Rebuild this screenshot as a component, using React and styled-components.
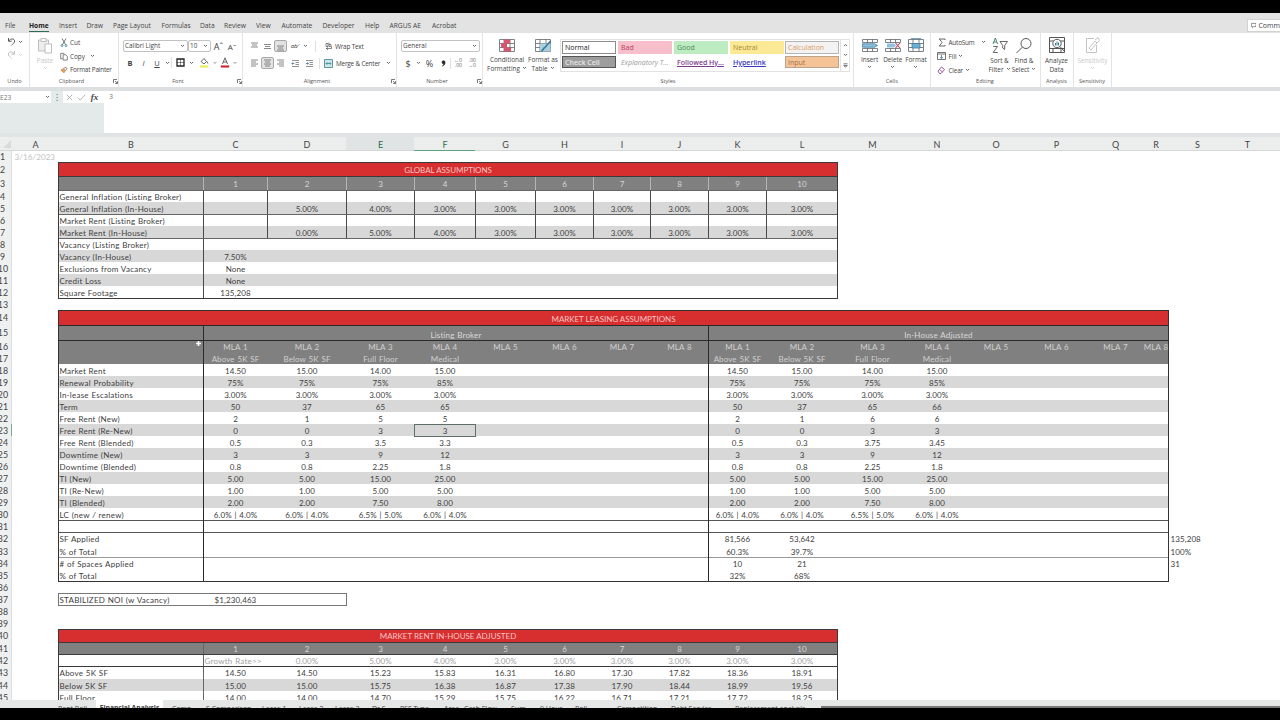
import React from "react";
import styled, { createGlobalStyle } from "styled-components";

const GlobalStyle = createGlobalStyle`
  * {
    box-sizing: border-box;
  }
  body {
    margin: 0;
    background: #000;
    overflow: hidden;
  }
`;

const Window = styled.div`
  width: 1280px;
  height: 720px;
  padding: 13px 0 12px;
  display: flex;
  flex-direction: column;
  overflow: hidden;
  background: #000;
  font-family: "Open Sans", "Noto Sans", sans-serif;
  font-size: 6.4px;
  color: #444;
`;

/* ---------- menu ---------- */

const MenuBar = styled.div`
  flex: none;
  height: 20px;
  padding: 6px 0 0 5px;
  display: flex;
  align-items: flex-start;
  background: #e3e3e3;
`;

const MenuItem = styled.div`
  width: ${(p) => p.$w}px;
  padding-top: 2px;
  font-size: 6.7px;
  line-height: 10px;
  white-space: nowrap;
  font-weight: ${(p) => (p.$active ? 700 : 400)};
  color: ${(p) => (p.$active ? "#222" : "#444")};

  span {
    display: inline-block;
    height: 11px;
    border-bottom: 1px solid ${(p) => (p.$active ? "#2f6b55" : "transparent")};
  }
`;

const Comments = styled.div`
  margin-left: auto;
  width: 33px;
  height: 13px;
  padding-left: 3px;
  display: flex;
  align-items: center;
  gap: 2px;
  background: #fff;
  border: 1px solid #d2d2d2;
  border-right: 0;
  font-size: 7px;
  white-space: nowrap;
  overflow: hidden;
`;

/* ---------- ribbon ---------- */

const Ribbon = styled.div`
  flex: none;
  height: 58px;
  display: flex;
  background: #fff;
  border-bottom: 4px solid #dde0e0;
`;

const Group = styled.div`
  width: ${(p) => p.$w}px;
  height: 54px;
  display: flex;
  flex-direction: column;
  border-right: 1px solid #e4e4e4;
`;

const GroupBody = styled.div`
  height: 43px;
  padding: ${(p) => p.$pad || "0"};
  display: flex;
  flex-direction: ${(p) => (p.$row ? "row" : "column")};
`;

const GroupLabel = styled.div`
  height: 10px;
  display: flex;
  align-items: center;
  font-size: 5.6px;
  color: #555;

  span {
    flex: 1;
    text-align: center;
  }
`;

const Line = styled.div`
  height: ${(p) => p.$h || 14}px;
  margin-top: ${(p) => p.$mt || 0}px;
  padding-left: ${(p) => p.$pl || 0}px;
  display: flex;
  align-items: center;
  white-space: nowrap;
`;

const Commands = styled.div`
  width: ${(p) => (p.$w ? p.$w + "px" : "auto")};
`;

const Slot = styled.div`
  flex: none;
  width: ${(p) => p.$w}px;
  height: ${(p) => p.$h || 12}px;
  padding-bottom: ${(p) => p.$lift || 0}px;
  display: flex;
  align-items: center;
  justify-content: center;
  font-size: ${(p) => p.$size || 8}px;
  font-weight: ${(p) => (p.$bold ? 700 : 400)};
  font-style: ${(p) => (p.$italic ? "italic" : "normal")};
  text-decoration: ${(p) => (p.$under ? "underline" : "none")};
  background: ${(p) => (p.$on ? "#e2e2e2" : "transparent")};
  border: ${(p) => (p.$on ? "1px solid #a9a9a9" : "0")};
  border-radius: 2px;
`;

const Text = styled.div`
  width: ${(p) => (p.$w ? p.$w + "px" : "auto")};
  padding-left: ${(p) => p.$pl || 0}px;
  letter-spacing: ${(p) => (p.$tight ? "-0.2px" : "normal")};
`;

const Decimals = styled.div`
  display: flex;
  flex-direction: column;
  align-items: flex-end;
  font-size: 5.2px;
  line-height: 4.8px;
  color: #666;

  b {
    font-weight: 400;
    color: #397b99;
  }
`;

const Select = styled.div`
  width: ${(p) => p.$w}px;
  height: 12px;
  padding: 0 2px 0 1px;
  display: flex;
  align-items: center;
  justify-content: space-between;
  border: 1px solid #c3c3c3;
  border-radius: 2px;
  font-size: 6.4px;
  line-height: 8px;
`;

const BigButton = styled.div`
  width: ${(p) => p.$w}px;
  padding-top: ${(p) => p.$pt || 0}px;
  display: flex;
  flex-direction: column;
  align-items: center;
  white-space: nowrap;
  line-height: 8.5px;
  color: ${(p) => (p.$off ? "#c8c8c8" : "#444")};

  > svg:first-child {
    margin-bottom: 3px;
  }
  span svg {
    margin: 0 0 1px 2px;
  }
`;

const Divider = styled.div`
  width: 1px;
  height: 11px;
  background: #e0e0e0;
`;

const Gallery = styled.div`
  width: 290px;
  height: 33px;
  margin-top: 6px;
  padding-left: 1px;
  display: flex;
  border: 1px solid #e2e2e2;
`;

const Styles = styled.div`
  display: grid;
  grid-template-columns: repeat(${(p) => p.$cols}, 54px);
  grid-template-rows: 13px 12px;
  column-gap: 2px;
  row-gap: 2px;
  padding: 1px 0 0 ${(p) => (p.$cols === 1 ? 1 : 0)}px;
`;

const StyleChip = styled.div`
  padding-left: 2px;
  display: flex;
  align-items: center;
  background: ${(p) => p.$bg || "#fff"};
  color: ${(p) => p.$fg || "#222"};
  border: 1px solid ${(p) => p.$line || "transparent"};
  font-size: 7px;
  font-weight: ${(p) => (p.$bold ? 600 : 400)};
  font-style: ${(p) => (p.$italic ? "italic" : "normal")};
  text-decoration: ${(p) => (p.$under ? "underline" : "none")};
  white-space: nowrap;
  overflow: hidden;
`;

const Scroller = styled.div`
  width: 9px;
  margin-left: auto;
  display: grid;
  grid-template-rows: repeat(3, 1fr);
  place-items: center;
  border-left: 1px solid #e2e2e2;
`;

/* ---------- formula bar ---------- */

const FormulaBar = styled.div`
  flex: none;
  height: 42px;
  display: flex;
  background: #e4eae9;
`;

const NameBox = styled.div`
  width: 51px;
  height: 12px;
  padding-right: 1px;
  display: flex;
  align-items: center;
  justify-content: space-between;
  background: #fff;
  color: #777;
  font-size: 6.6px;
`;

const FxBox = styled.div`
  width: 41px;
  height: 12px;
  display: flex;
  align-items: center;
  background: #fff;
`;

const Formula = styled.div`
  flex: 1;
  padding: 1px 0 0 5px;
  background: #fff;
  font-size: 7px;
  line-height: 10px;
  color: #777;
`;

const Fx = styled.span`
  font-family: "Liberation Serif", serif;
  font-style: italic;
  font-weight: 700;
  font-size: 9px;
  color: #444;
`;

/* ---------- sheet ---------- */

const LETTERS = "ABCDEFGHIJKLMNOPQRST".split("");
const X = [0, 12, 58, 203, 267, 346, 414, 475, 535, 593, 650, 708, 766, 837, 907, 966, 1025, 1087, 1143, 1168, 1226, 1268];
const Y = [151, 162, 176, 190, 202, 214, 226, 238, 250, 262, 274, 286, 298, 310, 325, 340, 352, 364, 376, 388, 400, 412, 424, 436, 448, 460, 472, 484, 496, 508, 520, 532, 545, 557, 569, 581, 593, 605, 617, 629, 642, 654, 666, 679, 691, 703];
const tracks = (list) => list.slice(1).map((v, i) => v - list[i] + "px").join(" ");

const Letters = styled.div`
  flex: none;
  height: 18px;
  display: grid;
  grid-template-columns: ${tracks(X)};
  background: #eceeee;
  border-top: 4px solid #e0e4e4;
  border-bottom: 1px solid #d5d8d7;
`;

const Letter = styled.div`
  display: flex;
  align-items: center;
  justify-content: center;
  padding: 1px 0 0 1px;
  font-family: Lato, sans-serif;
  font-size: 9px;
  color: ${(p) => (p.$active ? "#1f7148" : "#444")};
  background: ${(p) => (p.$shade ? "#e1e4e4" : "transparent")};
  box-shadow: ${(p) => (p.$mark ? "0 1px 0 #5fa37f" : "none")};
`;

const Corner = styled.div`
  display: flex;
  align-items: center;
  justify-content: flex-end;
  padding-right: 1px;
`;

const Sheet = styled.div`
  flex: none;
  height: 549px;
  display: grid;
  grid-template-columns: ${tracks(X)};
  grid-template-rows: ${tracks(Y)};
  overflow: hidden;
  background: #fff;
  font-family: Lato, "Open Sans", sans-serif;
  font-size: 8px;
  letter-spacing: 0.1px;
  word-spacing: 0.6px;
  color: #404040;
`;

const area = (p) => `
  grid-column: ${p.$c + 1} / ${(p.$c2 || p.$c) + 2};
  grid-row: ${p.$r} / ${(p.$r2 || p.$r) + 1};
`;

const Fill = styled.div`
  ${area}
  background: ${(p) => p.$bg};
`;

const Frame = styled.div`
  ${area}
  margin: 0 -1px -1px 0;
  border: 0 solid ${(p) => p.$line || "#3a3a3a"};
  border-width: ${(p) => p.$sides || "1px"};
`;

const Cell = styled.div`
  ${area}
  display: flex;
  align-items: center;
  justify-content: center;
  padding: 1px 0 0 1px;
  line-height: 10px;
  white-space: nowrap;
  color: ${(p) => p.$fg || "inherit"};
`;

const Label = styled(Cell)`
  justify-content: flex-start;
  padding-left: 1.5px;
  letter-spacing: 0.24px;
  word-spacing: 0.3px;
`;

const Aside = styled(Cell)`
  justify-content: flex-start;
  padding-left: 2.5px;
`;

const Title = styled(Cell)`
  padding-top: ${(p) => (p.$low ? 3 : 1)}px;
  letter-spacing: -0.03px;
  word-spacing: 0;
  color: #f6c4c2;
`;

const Subtitle = styled(Cell)`
  padding-top: 4px;
  letter-spacing: 0.15px;
  color: #d8d8d8;
`;

const RowNumber = styled(Cell)`
  justify-content: flex-end;
  padding-right: ${(p) => (p.$r > 9 ? 3 : 6)}px;
  font-size: 8.8px;
  letter-spacing: 0;
  background: #eff1f1;
  border-right: 1px solid ${(p) => (p.$current ? "#7fa892" : "#dcdfdf")};
  color: #444;
`;

const Selection = styled.div`
  ${area}
  margin: 0 -1px -1px 0;
  border: 1px solid #5f7068;
`;

const Pointer = styled.div`
  position: absolute;
  left: 196px;
  top: 341px;
  width: 5px;
  height: 5px;
  line-height: 0;
`;

const SheetTabs = styled.div`
  flex: none;
  height: 8px;
  padding-left: 58px;
  display: flex;
  overflow: hidden;
  background: #e5e6e6;
  font-size: 7px;
  line-height: 10px;
  color: #444;
`;

const SheetTab = styled.div`
  flex: none;
  width: ${(p) => p.$w}px;
  height: 15px;
  padding-top: ${(p) => (p.$active ? 3 : 4)}px;
  white-space: nowrap;
  text-align: ${(p) => (p.$active ? "center" : "left")};
  font-size: ${(p) => (p.$active ? 6.7 : 7)}px;
  font-weight: ${(p) => (p.$active ? 700 : 400)};
  background: ${(p) => (p.$active ? "#fff" : "transparent")};
`;

const ScrollTrack = styled.div`
  flex: 1;
  align-self: flex-end;
  height: 2px;
  background: #777;
`;

/* ---------- icons ---------- */

const Icon = ({ w = 10, h = w, vb, color = "#555", sw = 1, children }) => (
  <svg width={w} height={h} viewBox={vb || `0 0 ${w} ${h}`} fill="none" stroke={color} strokeWidth={sw}>
    {children}
  </svg>
);

const Caret = ({ color = "#555" }) => (
  <Icon w={5} h={4} color={color} sw={0.9}>
    <path d="M1 1l1.5 1.5L4 1" />
  </Icon>
);

const Launcher = () => (
  <Icon w={5} h={5} sw={0.8}>
    <path d="M.5 4V.5H4M2 2l2.4 2.4M4.5 2.2v2.3H2.2" />
  </Icon>
);

const Lines = ({ rows }) => (
  <Icon w={9} h={9} color="#6a6a6a" sw={0.8}>
    {rows.map(([y, a, b]) => (
      <path key={y} d={`M${a} ${y}H${b}`} />
    ))}
  </Icon>
);

const TableIcon = ({ kind }) => (
  <Icon w={18} h={15} color="#5d6468" sw={0.8}>
    {kind === "insert" || kind === "delete" ? (
      <path d="M1.5 1.5h15v3h-15zM6.500 1.500v3M11.500 1.500v3M1.500 10.500h15v3h-15zM6.500 10.500v3M11.500 10.500v3" />
    ) : (
      <path d="M1.5 1.5h15v12h-15zM1.5 5.5h15M1.5 9.5h15M6 1.5v12M12 1.5v12" />
    )}
    {kind === "cond" && (
      <g stroke="none" fill="#d9536f">
        <path d="M6 1.5h6v4H6zM3 5.5h6v4H3zM6 9.5h7v4H6z" />
      </g>
    )}
    {kind === "table" && (
      <>
        <path stroke="none" fill="#a9cfe0" d="M6 5.5h10.500v8H6z" />
        <path stroke="#397b99" strokeWidth="1.6" d="M16.500 3l-6 7M10.500 9.500l-3 4" />
      </>
    )}
    {kind === "insert" && <path stroke="#3c7fa6" fill="#8fc1dd" d="M1.500 5.800h12l3 1.700-3 1.700h-12z" />}
    {kind === "delete" && (
      <>
        <path stroke="none" fill="#8fc1dd" d="M3 5.500h7l2 2-2 2H3z" />
        <path stroke="#c33f5c" strokeWidth="1.1" d="M11.500 5l4.500 5M16 5l-4.500 5" />
      </>
    )}
    {kind === "format" && (
      <>
        <path stroke="#3c7fa6" fill="#6daed3" d="M5 5.500h8v4.500H5z" />
        <path stroke="#3c7fa6" d="M4 .4h10" />
      </>
    )}
  </Icon>
);

const Undo = ({ color, flip }) => (
  <Icon w={9} h={9} color={color} sw={1}>
    <path transform={flip ? "translate(9 0) scale(-1 1)" : undefined} d="M1.5 1v3.2h3.2M1.7 4C3.5 1.2 7.5 1.3 7.6 4.1 7.7 5.8 5.800 7 4.500 8.300" />
  </Icon>
);

const Paste = () => (
  <Icon w={16} h={17} color="#bdbdbd" sw={1}>
    <path fill="#ededed" d="M1.500 3h10v11h-10z" />
    <path fill="#fff" d="M4 1.500h5v3H4z" />
    <path fill="#fff" d="M8 7h6.500v9H8z" />
  </Icon>
);

const Scissors = () => (
  <Icon w={8} h={9} sw={0.8}>
    <path d="M2 .5l3.500 6M6 .5L2.500 6.500" />
    <circle cx="2" cy="7.500" r="1" stroke="#397b99" />
    <circle cx="6" cy="7.500" r="1" stroke="#397b99" />
  </Icon>
);

const Copy = () => (
  <Icon w={9} h={9} sw={0.8}>
    <path d="M3 7H.8V1h3.500L5 2M3.500 2.500h3l1.700 1.700V8.500H3.500z" />
  </Icon>
);

const Painter = () => (
  <Icon w={9} h={8} sw={0.8}>
    <path fill="#e9a15b" stroke="#c98342" d="M1 4l3-1.500 2 2L4.500 7.200z" />
    <path d="M4 2.500L6.500.8l1.500 2L6 4.500" />
  </Icon>
);

const Swatch = ({ letter, color }) => (
  <Icon w={10} h={11} sw={0.9}>
    {letter ? <path d="M2.500 7L5 .8 7.500 7M3.300 5h3.400" /> : <path d="M2 4.500L5 1.500l2.500 3L5 7zM8 4.500l.8 2" />}
    <path stroke={color} strokeWidth="2.2" d="M.8 9.500h8.400" />
  </Icon>
);

const Indent = ({ out }) => (
  <Icon w={9} h={9} color="#777" sw={0.8}>
    <path d="M1 1.500h7M4.500 3.500H8M4.500 5.500H8M1 7.500h7" />
    <path stroke="#397b99" d={out ? "M3.500 4.500H.8M2 3.300L.8 4.500 2 5.700" : "M.8 4.500h2.700M2.300 3.300l1.200 1.200-1.200 1.200"} />
  </Icon>
);

const Find = () => (
  <Icon w={18} h={17} sw={1}>
    <circle cx="11" cy="6.500" r="5" />
    <path d="M7.300 10.200L1.500 16" />
  </Icon>
);

const Analyze = () => (
  <Icon w={18} h={18} color="#555" sw={1}>
    <path d="M1.500 1.500h15v15h-15zM1.500 5h15M1.500 12.500h15M5 12.500v4M13 12.500v4" />
    <circle cx="9" cy="7.500" r="4.200" fill="#fff" />
    <path d="M12 10.500l4 4.500" />
    <path stroke="#397b99" d="M7.500 9.500V7M9 9.500v-4M10.500 9.500v-3" />
  </Icon>
);

const Sensitivity = () => (
  <Icon w={15} h={18} color="#c4c4c4" sw={1}>
    <path d="M9 2.500H1.500v14h10V9" />
    <path d="M4 12l6-7 2 2-6 7zM10 4l3-2.500 1.500 3L12 7" />
  </Icon>
);

/* ---------- data ---------- */

const MENU = [
  ["File", 24], ["Home", 30], ["Insert", 27.5], ["Draw", 26.5], ["Page Layout", 48.5], ["Formulas", 38.5],
  ["Data", 24], ["Review", 32], ["View", 25.5], ["Automate", 41], ["Developer", 42.5], ["Help", 24.5],
  ["ARGUS AE", 42.5], ["Acrobat", 40],
];

const years = ["1", "2", "3", "4", "5", "6", "7", "8", "9", "10"];
const three = "3.00%";

// [row, first column, values, color]
const VALUES = [
  [3, 3, years, "#d6d6d6"],
  [5, 4, ["5.00%", "4.00%", three, three, three, three, three, three, three]],
  [7, 4, ["0.00%", "5.00%", "4.00%", three, three, three, three, three, three]],
  [9, 3, ["7.50%"]],
  [10, 3, ["None"]],
  [11, 3, ["None"]],
  [12, 3, ["135,208"]],
  [16, 3, ["MLA 1", "MLA 2", "MLA 3", "MLA 4", "MLA 5", "MLA 6", "MLA 7", "MLA 8", "MLA 1", "MLA 2", "MLA 3", "MLA 4", "MLA 5", "MLA 6", "MLA 7", "MLA 8"], "#d0d0d0"],
  [32, 11, ["81,566", "53,642"]],
  [33, 11, ["60.3%", "39.7%"]],
  [34, 11, ["10", "21"]],
  [35, 11, ["32%", "68%"]],
  [37, 3, ["$1,230,463"]],
  [41, 3, years, "#d6d6d6"],
  [42, 4, ["0.00%", "5.00%", "4.00%", three, three, three, three, three, three], "#a2a2a2"],
  [43, 3, ["14.50", "14.50", "15.23", "15.83", "16.31", "16.80", "17.30", "17.82", "18.36", "18.91"]],
  [44, 3, ["15.00", "15.00", "15.75", "16.38", "16.87", "17.38", "17.90", "18.44", "18.99", "19.56"]],
  [45, 3, ["14.00", "14.00", "14.70", "15.29", "15.75", "16.22", "16.71", "17.21", "17.72", "18.25"]],
];

// four listing broker values, then the in-house ones where they differ
const MLA = [
  [17, ["Above 5K SF", "Below 5K SF", "Full Floor", "Medical"]],
  [18, ["14.50", "15.00", "14.00", "15.00"]],
  [19, ["75%", "75%", "75%", "85%"]],
  [20, [three, three, three, three]],
  [21, ["50", "37", "65", "65"], ["50", "37", "65", "66"]],
  [22, ["2", "1", "5", "5"], ["2", "1", "6", "6"]],
  [23, ["0", "0", "3", "3"]],
  [24, ["0.5", "0.3", "3.5", "3.3"], ["0.5", "0.3", "3.75", "3.45"]],
  [25, ["3", "3", "9", "12"]],
  [26, ["0.8", "0.8", "2.25", "1.8"]],
  [27, ["5.00", "5.00", "15.00", "25.00"]],
  [28, ["1.00", "1.00", "5.00", "5.00"]],
  [29, ["2.00", "2.00", "7.50", "8.00"]],
  [30, ["6.0% | 4.0%", "6.0% | 4.0%", "6.5% | 5.0%", "6.0% | 4.0%"]],
];

const LABELS = {
  4: "General Inflation (Listing Broker)",
  5: "General Inflation (In-House)",
  6: "Market Rent (Listing Broker)",
  7: "Market Rent (In-House)",
  8: "Vacancy (Listing Broker)",
  9: "Vacancy (In-House)",
  10: "Exclusions from Vacancy",
  11: "Credit Loss",
  12: "Square Footage",
  18: "Market Rent",
  19: "Renewal Probability",
  20: "In-lease Escalations",
  21: "Term",
  22: "Free Rent (New)",
  23: "Free Rent (Re-New)",
  24: "Free Rent (Blended)",
  25: "Downtime (New)",
  26: "Downtime (Blended)",
  27: "TI (New)",
  28: "TI (Re-New)",
  29: "TI (Blended)",
  30: "LC (new / renew)",
  32: "SF Applied",
  33: "% of Total",
  34: "# of Spaces Applied",
  35: "% of Total",
  37: "STABILIZED NOI (w Vacancy)",
  43: "Above 5K SF",
  44: "Below 5K SF",
  45: "Full Floor",
};

const TABS = [
  ["Rent Roll", 38], ["Financial Analysis", 67, true], ["", 9], ["Comp", 34], ["S Comparison", 56], ["Lease 1", 37],
  ["Lease 2", 36], ["Lease 3", 37], ["Dr S", 28], ["PSF Type", 44], ["Area", 20], ["Cash Flow", 47],
  ["Sum", 29], ["9 Hour", 35], ["Roll", 42], ["Competition", 54], ["Debt Service", 64], ["Replacement analysis", 86],
];

const RED = "#d72e30";
const GRAY = "#808080";
const BAND = "#d8d8d8";

/* ---------- parts ---------- */

function RibbonBar() {
  return (
    <Ribbon>
      <Group $w={30}>
        <GroupBody $pad="2px 0 0 5px">
          <Line $h={13}>
            <Slot $w={12}><Undo color="#555" /></Slot>
            <Slot $w={7}><Caret /></Slot>
          </Line>
          <Line $h={13}>
            <Slot $w={12}><Undo color="#bbb" flip /></Slot>
            <Slot $w={7}><Caret color="#ccc" /></Slot>
          </Line>
        </GroupBody>
        <GroupLabel><span>Undo</span></GroupLabel>
      </Group>

      <Group $w={89}>
        <GroupBody $row>
          <BigButton $w={30} $off $pt={4}>
            <Paste />
            <span>Paste</span>
            <Caret color="#ccc" />
          </BigButton>
          <Commands>
            <Line $mt={2}><Slot $w={8}><Scissors /></Slot><Text $pl={2}>Cut</Text></Line>
            <Line><Slot $w={8}><Copy /></Slot><Text $pl={2} $w={22}>Copy</Text><Caret /></Line>
            <Line $h={13}><Slot $w={8}><Painter /></Slot><Text $pl={2} $tight>Format Painter</Text></Line>
          </Commands>
        </GroupBody>
        <GroupLabel><span>Clipboard</span><Launcher /></GroupLabel>
      </Group>

      <Group $w={124}>
        <GroupBody>
          <Line $mt={6} $pl={4}>
            <Select $w={65}>Calibri Light<Caret /></Select>
            <Select $w={23}>10<Caret /></Select>
            <Slot $w={15} $size={9}>A&#710;</Slot>
            <Slot $w={12} $size={8}>A&#711;</Slot>
          </Line>
          <Line $mt={2} $pl={4} $h={15}>
            <Slot $w={14} $size={7.5} $bold>B</Slot>
            <Slot $w={13} $size={7.5} $italic>I</Slot>
            <Slot $w={14} $size={7.5} $under>U</Slot>
            <Slot $w={7}><Caret /></Slot>
            <Divider />
            <Slot $w={17}>
              <Icon w={9} h={9} color="#222" sw={1.3}>
                <path d="M1 1h7v7H1z" />
                <path strokeWidth=".5" d="M4.500 1v7M1 4.500h7" />
              </Icon>
            </Slot>
            <Slot $w={5}><Caret /></Slot>
            <Slot $w={19}><Swatch color="#e9ee5a" /></Slot>
            <Slot $w={4}><Caret /></Slot>
            <Slot $w={16}><Swatch letter color="#c82f35" /></Slot>
            <Slot $w={4}><Caret /></Slot>
          </Line>
        </GroupBody>
        <GroupLabel><span>Font</span><Launcher /></GroupLabel>
      </Group>

      <Group $w={154}>
        <GroupBody>
          <Line $mt={6} $pl={4}>
            <Slot $w={14}><Lines rows={[[1, 1, 8], [3, 2, 7], [5, 1, 8]]} /></Slot>
            <Slot $w={13}><Lines rows={[[2.5, 1, 8], [4.5, 2, 7], [6.5, 1, 8]]} /></Slot>
            <Slot $w={13} $on><Lines rows={[[4, 1, 8], [6, 2, 7], [8, 1, 8]]} /></Slot>
            <Slot $w={15} $size={6} $italic>ab⁄</Slot>
            <Slot $w={6}><Caret /></Slot>
            <Slot $w={15}><Divider /></Slot>
            <Slot $w={12}>
              <Icon w={8} h={9} sw={0.7}>
                <path d="M1 1.500h2v3H1zM4 .5v4h2v-2H4M1 6.500h5.500V4.500M3 5.300L1.500 6.500 3 8" />
              </Icon>
            </Slot>
            <Text $tight>Wrap Text</Text>
          </Line>
          <Line $mt={3} $pl={4}>
            <Slot $w={14}><Lines rows={[[1, 1, 8], [3, 1, 6], [5, 1, 8], [7, 1, 6]]} /></Slot>
            <Slot $w={13} $on><Lines rows={[[1, 1, 8], [3, 2, 7], [5, 1, 8], [7, 2, 7]]} /></Slot>
            <Slot $w={13}><Lines rows={[[1, 1, 8], [3, 3, 8], [5, 1, 8], [7, 3, 8]]} /></Slot>
            <Slot $w={16}><Indent out /></Slot>
            <Slot $w={13}><Indent /></Slot>
            <Slot $w={6}><Divider /></Slot>
            <Slot $w={13}>
              <Icon w={9} h={9} color="#4a8f96" sw={0.9}>
                <path fill="#cfe6ea" d="M.5.5h8v8h-8z" />
                <path d="M2 4.500h5M3.200 3.300L2 4.500l1.200 1.200M5.800 3.300L7 4.500 5.800 5.700" />
              </Icon>
            </Slot>
            <Text $w={51} $pl={1} $tight>Merge &amp; Center</Text>
            <Caret />
          </Line>
        </GroupBody>
        <GroupLabel><span>Alignment</span><Launcher /></GroupLabel>
      </Group>

      <Group $w={86}>
        <GroupBody>
          <Line $mt={6} $pl={4}><Select $w={79}>General<Caret /></Select></Line>
          <Line $mt={3} $pl={5}>
            <Slot $w={12} $size={9}>$</Slot>
            <Slot $w={8}><Caret /></Slot>
            <Slot $w={15} $size={9}>%</Slot>
            <Slot $w={13}>
              <Icon w={5} h={7} color="#222" sw={0.6}>
                <path fill="#222" d="M4 2.200a1.500 1.500 0 1 0-1.200 1.500C2.800 4.800 2.200 5.500 1.300 6 3.300 5.600 4.200 4 4 2.200z" />
              </Icon>
            </Slot>
            <Divider />
            <Slot $w={14}><Decimals><span><b>←</b>0</span><span>.00</span></Decimals></Slot>
            <Slot $w={14}><Decimals><span>.00</span><span><b>→</b>0</span></Decimals></Slot>
          </Line>
        </GroupBody>
        <GroupLabel><span>Number</span><Launcher /></GroupLabel>
      </Group>

      <Group $w={371}>
        <GroupBody $row $pad="0 0 0 5px">
          <BigButton $w={38} $pt={5}>
            <TableIcon kind="cond" />
            <span>Conditional</span>
            <span>Formatting<Caret /></span>
          </BigButton>
          <BigButton $w={34} $pt={5}>
            <TableIcon kind="table" />
            <span>Format as</span>
            <span>Table<Caret /></span>
          </BigButton>
          <Gallery>
            <Styles $cols={4}>
              <StyleChip $line="#8c8c8c">Normal</StyleChip>
              <StyleChip $bg="#f6bfcb" $fg="#b8405c">Bad</StyleChip>
              <StyleChip $bg="#bdebc2" $fg="#4d8a58">Good</StyleChip>
              <StyleChip $bg="#fbe995" $fg="#a58432">Neutral</StyleChip>
              <StyleChip $bg="#9d9d9d" $fg="#e8e8e8" $line="#555" $bold>Check Cell</StyleChip>
              <StyleChip $fg="#9b9b9b" $italic>Explanatory T...</StyleChip>
              <StyleChip $fg="#7b3b8c" $under $bold>Followed Hy...</StyleChip>
              <StyleChip $fg="#3a35c0" $under $bold>Hyperlink</StyleChip>
            </Styles>
            <Styles $cols={1}>
              <StyleChip $bg="#f3f3f3" $fg="#dc9a5c" $line="#b5b5b5">Calculation</StyleChip>
              <StyleChip $bg="#f6c396" $fg="#9b7450" $line="#b9a48f">Input</StyleChip>
            </Styles>
            <Scroller>
              <Icon w={5} h={4} sw={0.9}><path d="M1 3l1.500-1.500L4 3" /></Icon>
              <Caret />
              <Icon w={5} h={5} sw={0.8}><path d="M.5.8h4M.8 2.500h3.400L2.500 4.300z" /></Icon>
            </Scroller>
          </Gallery>
        </GroupBody>
        <GroupLabel><span>Styles</span></GroupLabel>
      </Group>

      <Group $w={76.5}>
        <GroupBody $row $pad="5px 0 0 4px">
          {["Insert", "Delete", "Format"].map((name) => (
            <BigButton key={name} $w={23.2}>
              <TableIcon kind={name.toLowerCase()} />
              <span>{name}</span>
              <Caret />
            </BigButton>
          ))}
        </GroupBody>
        <GroupLabel><span>Cells</span></GroupLabel>
      </Group>

      <Group $w={110}>
        <GroupBody $row $pad="0 0 0 6px">
          <Commands $w={50}>
            <Line $mt={2}>
              <Slot $w={10}><Icon w={8} h={9} sw={0.9}><path d="M7 2V1H1.200l3 3.500-3 3.500H7V7" /></Icon></Slot>
              <Text $w={34} $pl={2} $tight>AutoSum</Text>
              <Caret />
            </Line>
            <Line>
              <Slot $w={10}><Icon w={9} h={8} sw={0.8}><path d="M.5.5h8v7h-8zM.5 2h8" /><path stroke="#397b99" d="M4.500 3v3.500M3 5.200l1.500 1.300L6 5.200" /></Icon></Slot>
              <Text $w={11} $pl={2}>Fill</Text>
              <Caret />
            </Line>
            <Line>
              <Slot $w={10}><Icon w={9} h={9} color="#93488f" sw={0.9}><path d="M1 5l3.500-4L7.500 3.500 4 7.500H2.500z" /><path d="M2.500 3.500l3 2.500" /></Icon></Slot>
              <Text $w={18} $pl={2} $tight>Clear</Text>
              <Caret />
            </Line>
          </Commands>
          <BigButton $w={26} $pt={4}>
            <Icon w={16} h={17} sw={0.9}>
              <path stroke="#397b6b" d="M1 7L3.300 1 5.600 7M1.800 5h3" />
              <path d="M1.200 9.500h4.300L1.200 15.500h4.600M8 4.500h7.500L12.700 8.500v4l-2-1.500V8.500z" />
            </Icon>
            <span>Sort &amp;</span>
            <span>Filter<Caret /></span>
          </BigButton>
          <BigButton $w={23} $pt={4}>
            <Find />
            <span>Find &amp;</span>
            <span>Select<Caret /></span>
          </BigButton>
        </GroupBody>
        <GroupLabel><span>Editing</span></GroupLabel>
      </Group>

      <Group $w={33}>
        <GroupBody>
          <BigButton $w={32} $pt={3}><Analyze /><span>Analyze</span><span>Data</span></BigButton>
        </GroupBody>
        <GroupLabel><span>Analysis</span></GroupLabel>
      </Group>
      <Group $w={38}>
        <GroupBody>
          <BigButton $w={38} $off $pt={3}><Sensitivity /><span>Sensitivity</span><Caret color="#ccc" /></BigButton>
        </GroupBody>
        <GroupLabel><span>Sensitivity</span></GroupLabel>
      </Group>
    </Ribbon>
  );
}

function Grid() {
  const bands = [
    ...[5, 7, 9, 11, 44].map((r) => [r, 12]),
    ...[19, 21, 23, 25, 27, 29].map((r) => [r, 18]),
  ];

  return (
    <Sheet>
      {bands.map(([r, end]) => (
        <Fill key={r} $c={2} $c2={end} $r={r} $bg={BAND} />
      ))}
      <Fill $c={2} $c2={12} $r={2} $bg={RED} />
      <Fill $c={2} $c2={12} $r={3} $bg={GRAY} />
      <Fill $c={2} $c2={18} $r={14} $bg={RED} />
      <Fill $c={2} $c2={18} $r={15} $r2={17} $bg={GRAY} />
      <Fill $c={2} $c2={12} $r={40} $bg={RED} />
      <Fill $c={2} $c2={12} $r={41} $bg={GRAY} />

      {/* global assumptions */}
      {[4, 5, 6, 7, 8, 9, 10, 11, 12].map((c) => (
        <React.Fragment key={c}>
          <Frame $c={c} $r={3} $sides="0 0 0 1px" $line="#b5b5b5" />
          <Frame $c={c} $r={4} $r2={7} $sides="0 0 0 1px" $line="#4a4a4a" />
        </React.Fragment>
      ))}
      <Frame $c={3} $r={3} $sides="0 0 0 1px" $line="#b5b5b5" />
      <Frame $c={3} $r={4} $r2={12} $sides="0 0 0 1px" $line="#4a4a4a" />
      <Frame $c={2} $c2={12} $r={2} />
      <Frame $c={2} $c2={12} $r={4} $r2={5} $sides="1px 0" $line="#666" />
      <Frame $c={2} $c2={12} $r={7} $sides="0 0 1px" $line="#666" />
      <Frame $c={2} $c2={12} $r={2} $r2={12} />

      {/* market leasing assumptions */}
      <Frame $c={2} $c2={18} $r={14} $line="#2a2a2a" />
      <Frame $c={2} $c2={18} $r={15} $sides="0 0 1px" $line="#2a2a2a" />
      <Frame $c={2} $c2={18} $r={31} $sides="1px 0" $line="#555" />
      <Frame $c={2} $c2={18} $r={33} $sides="0 0 1px" $line="#999" />
      <Frame $c={3} $c2={10} $r={15} $r2={35} $sides="0 1px" $line="#2a2a2a" />
      <Frame $c={2} $c2={18} $r={14} $r2={35} $line="#333" />

      <Frame $c={2} $c2={4} $r={37} $line="#777" />

      {/* market rent */}
      <Frame $c={3} $r={41} $r2={45} $sides="0 0 0 1px" $line="#666" />
      <Frame $c={2} $c2={12} $r={40} />
      <Frame $c={2} $c2={12} $r={42} $sides="1px 0" />
      <Frame $c={2} $c2={12} $r={40} $r2={45} />

      {Y.slice(1).map((_, i) => (
        <RowNumber key={i} $c={0} $r={i + 1} $current={i === 22}>{i + 1}</RowNumber>
      ))}
      <Aside $c={1} $r={1} $fg="#c2c2c2">3/16/2023</Aside>
      <Title $c={2} $c2={12} $r={2}>GLOBAL ASSUMPTIONS</Title>
      <Title $c={2} $c2={18} $r={14} $low>MARKET LEASING ASSUMPTIONS</Title>
      <Subtitle $c={3} $c2={10} $r={15}>Listing Broker</Subtitle>
      <Subtitle $c={11} $c2={18} $r={15}>In-House Adjusted</Subtitle>
      <Title $c={2} $c2={12} $r={40}>MARKET RENT IN-HOUSE ADJUSTED</Title>
      {Object.entries(LABELS).map(([r, label]) => (
        <Label key={r} $c={2} $r={Number(r)}>{label}</Label>
      ))}
      <Label $c={3} $r={42} $fg="#a2a2a2">Growth Rate&gt;&gt;</Label>
      {VALUES.map(([r, first, list, fg]) =>
        list.map((v, i) => (
          <Cell key={r + "-" + i} $c={first + i} $r={r} $fg={fg}>{v}</Cell>
        ))
      )}
      {MLA.map(([r, broker, house]) =>
        [...broker, ...(house || broker)].map((v, i) => (
          <Cell key={r + "-" + i} $c={i < 4 ? 3 + i : 7 + i} $r={r} $fg={r === 17 ? "#d0d0d0" : undefined}>{v}</Cell>
        ))
      )}
      <Aside $c={19} $r={32}>135,208</Aside>
      <Aside $c={19} $r={33}>100%</Aside>
      <Aside $c={19} $r={34}>31</Aside>
      <Selection $c={6} $r={23} />
    </Sheet>
  );
}

function App() {
  return (
    <Window>
      <GlobalStyle />
      <MenuBar>
        {MENU.map(([name, w]) => (
          <MenuItem key={name} $w={w} $active={name === "Home"}><span>{name}</span></MenuItem>
        ))}
        <Comments>
          <Icon w={7} h={7} sw={0.8}><path d="M.5.8h6v4h-3L2 6.300V4.800H.5z" /></Icon>
          Comm
        </Comments>
      </MenuBar>
      <RibbonBar />
      <FormulaBar>
        <NameBox>E23<Caret /></NameBox>
        <Slot $w={12} $size={8}>⁝</Slot>
        <FxBox>
          <Slot $w={12}><Icon w={7} h={7} color="#aaa" sw={0.9}><path d="M.8.8l5.400 5.400M6.200.8L.8 6.200" /></Icon></Slot>
          <Slot $w={13}><Icon w={9} h={7} color="#aaa" sw={0.9}><path d="M.8 3.800l2.400 2.400L8.200.8" /></Icon></Slot>
          <Slot $w={13}><Fx>fx</Fx></Slot>
        </FxBox>
        <Formula>3</Formula>
      </FormulaBar>
      <Letters>
        <Corner>
          <Icon w={8} h={8} sw={0}><path fill="#d8dbdb" d="M8 0v8H0z" /></Icon>
        </Corner>
        {LETTERS.map((l) => (
          <Letter key={l} $active={l === "E" || l === "F"} $shade={l === "E"} $mark={l === "F"}>{l}</Letter>
        ))}
      </Letters>
      <Grid />
      <SheetTabs>
        {TABS.map(([name, w, active], i) => (
          <SheetTab key={i} $w={w} $active={active}>{name}</SheetTab>
        ))}
        <ScrollTrack />
      </SheetTabs>
      <Pointer>
        <Icon w={5} h={5} color="#fff" sw={1.6}><path d="M2.500 0v5M0 2.500h5" /></Icon>
      </Pointer>
    </Window>
  );
}

export default App;
